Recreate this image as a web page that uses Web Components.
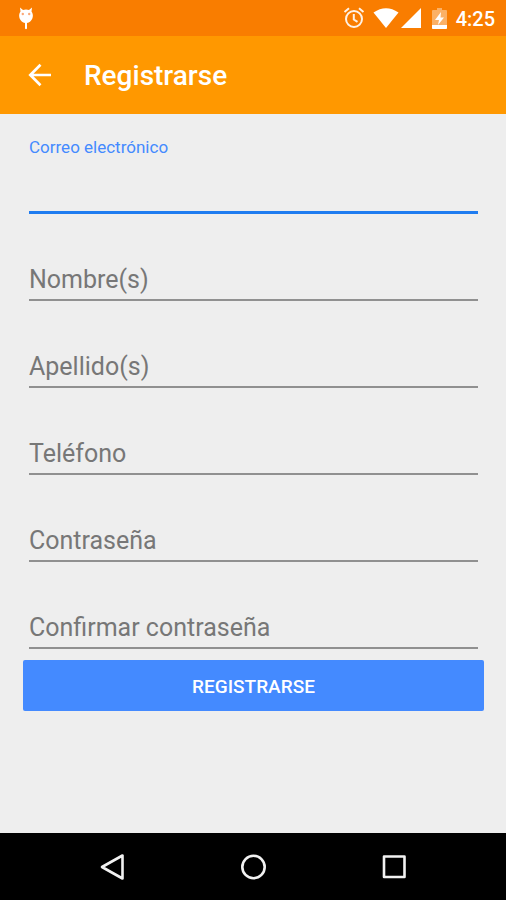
<!DOCTYPE html>
<html lang="es">
<head>
<meta charset="utf-8">
<meta name="viewport" content="width=device-width, initial-scale=1">
<title>Registrarse</title>
<style>
    body {
        margin: 0;
        background: #eee;
        font-family: Roboto, sans-serif;
    }
</style>
</head>
<body>
<sign-up-screen></sign-up-screen>

<script>
class StatusBar extends HTMLElement {
    constructor() {
        super();
        const shadow = this.attachShadow({ mode: 'open' });

        shadow.innerHTML = `
            <style>
                :host {
                    display: flex;
                    align-items: center;
                    height: 36px;
                    padding: 0 11px 0 17px;
                    background: #f97d00;
                    color: #fff;
                }
                svg {
                    display: block;
                    fill: currentColor;
                }
                .notification {
                    margin-right: auto;
                }
                .battery {
                    margin: 0 9px 0 11px;
                }
                .wifi {
                    margin-left: 8px;
                }
                .time {
                    font-size: 20px;
                    font-weight: 500;
                    line-height: 24px;
                    padding-top: 2px;
                }
            </style>
            <svg class="notification" width="18" height="24" viewBox="0 0 18 24">
                <path d="M3 1.500L6 4Q9 2.800 12 4L15 1.500L14.500 5.500A7.400 7.400 0 0 1 10 17V22.500Q9 24 8 22.500V17A7.400 7.400 0 0 1 3.500 5.500Z"/>
                <circle cx="5.800" cy="8" r="1.200" fill="#fba878"/>
                <circle cx="12.200" cy="8" r="1.200" fill="#fba878"/>
            </svg>
            <svg width="22" height="22" viewBox="0 0 22 22" opacity="0.9">
                <g fill="none" stroke="currentColor" stroke-width="2">
                    <circle cx="11" cy="12" r="8"/>
                    <path d="M1.500 5L6 1.300M20.500 5L16 1.300"/>
                    <path d="M10.800 7V12.500L14.500 14.800"/>
                </g>
            </svg>
            <svg class="wifi" width="26" height="20" viewBox="0 0 26 20">
                <path d="M0.500 4.500Q13 -4 25.500 4.500L13 20Z"/>
            </svg>
            <svg width="22" height="20" viewBox="0 0 22 20">
                <path d="M22 0V20H2Z"/>
            </svg>
            <svg class="battery" width="15" height="21" viewBox="0 0 15 21">
                <path d="M5 0H10V2H14Q15 2 15 3V20Q15 21 14 21H1Q0 21 0 20V3Q0 2 1 2H5Z" opacity="0.4"/>
                <path d="M0 17H15V20Q15 21 14 21H1Q0 21 0 20ZM9 4L3 12H7L6 17L12 9.500H8.500Z"/>
            </svg>
            <span class="time"><slot></slot></span>
        `;
    }
}

class AppBar extends HTMLElement {
    constructor() {
        super();
        const shadow = this.attachShadow({ mode: 'open' });

        shadow.innerHTML = `
            <style>
                :host {
                    display: flex;
                    align-items: center;
                    gap: 20px;
                    height: 78px;
                    padding: 0 16px;
                    background: #ff9800;
                    color: #fff;
                }
                button {
                    display: grid;
                    place-items: center;
                    width: 48px;
                    height: 48px;
                    padding: 0;
                    border: 0;
                    background: none;
                    color: inherit;
                }
                h1 {
                    margin: 0;
                    padding-top: 2px;
                    font-size: 28px;
                    font-weight: 500;
                    line-height: 36px;
                }
            </style>
            <button type="button" aria-label="Atrás">
                <svg width="24" height="24" viewBox="0 0 24 24" fill="none" stroke="#fff" stroke-width="2.700">
                    <path d="M23 12H3M12.500 1.800L2.300 12L12.500 22.200"/>
                </svg>
            </button>
            <h1><slot></slot></h1>
        `;
    }
}

class TextField extends HTMLElement {
    constructor() {
        super();
        const shadow = this.attachShadow({ mode: 'open' });

        // the label shares the input's grid cell until the field is active
        shadow.innerHTML = `
            <style>
                :host {
                    display: grid;
                    grid-template-rows: 39px 48px;
                }
                .field {
                    display: contents;
                }
                input {
                    grid-area: 2 / 1;
                    box-sizing: border-box;
                    width: 100%;
                    height: 48px;
                    margin: 0;
                    padding: 0;
                    border: 0;
                    border-bottom: 2px solid #909090;
                    border-radius: 0;
                    outline: 0;
                    background: none;
                    color: #212121;
                    font: inherit;
                    font-size: 25px;
                }
                label {
                    grid-area: 2 / 1;
                    align-self: end;
                    justify-self: start;
                    color: #777;
                    font-size: 25px;
                    line-height: 42px;
                    pointer-events: none;
                }
                .active input {
                    border-bottom: 3px solid #1f7cf0;
                }
                .active label {
                    grid-area: 1 / 1;
                    align-self: center;
                    color: #448aff;
                    font-size: 17px;
                    line-height: 24px;
                }
            </style>
            <div class="field">
                <input id="input">
                <label for="input"><slot></slot></label>
            </div>
        `;

        this.field = shadow.querySelector('.field');
        this.input = shadow.querySelector('input');
    }

    connectedCallback() {
        this.input.type = this.getAttribute('type') || 'text';
        this.field.classList.toggle('active', this.hasAttribute('active'));
        this.input.addEventListener('focus', () => this.field.classList.add('active'));
        this.input.addEventListener('blur', () => {
            this.field.classList.toggle('active', this.input.value !== '');
        });
    }
}

class RaisedButton extends HTMLElement {
    constructor() {
        super();
        const shadow = this.attachShadow({ mode: 'open' });

        shadow.innerHTML = `
            <style>
                :host {
                    display: block;
                }
                button {
                    display: block;
                    width: 100%;
                    height: 51px;
                    padding: 1px 0 0;
                    border: 0;
                    border-radius: 2px;
                    background: #448aff;
                    color: #fff;
                    font: inherit;
                    font-size: 19px;
                    font-weight: 500;
                    text-transform: uppercase;
                }
            </style>
            <button type="button"><slot></slot></button>
        `;
    }
}

class NavigationBar extends HTMLElement {
    constructor() {
        super();
        const shadow = this.attachShadow({ mode: 'open' });

        shadow.innerHTML = `
            <style>
                :host {
                    display: grid;
                    grid-template-columns: repeat(3, 1fr);
                    height: 67px;
                    padding: 0 8%;
                    background: #000;
                }
                button {
                    display: grid;
                    place-items: center;
                    padding: 0;
                    border: 0;
                    background: none;
                }
                svg {
                    fill: none;
                    stroke: #f2f2f2;
                    stroke-width: 2.600;
                    stroke-linejoin: round;
                }
            </style>
            <button type="button" aria-label="Atrás">
                <svg width="28" height="28" viewBox="0 0 28 28"><path d="M25.500 2.500V25.500L5 14Z"/></svg>
            </button>
            <button type="button" aria-label="Inicio">
                <svg width="28" height="28" viewBox="0 0 28 28"><circle cx="14.500" cy="14" r="11.200"/></svg>
            </button>
            <button type="button" aria-label="Recientes">
                <svg width="28" height="28" viewBox="0 0 28 28"><rect x="3" y="3.500" width="20.500" height="20.500"/></svg>
            </button>
        `;
    }
}

class SignUpScreen extends HTMLElement {
    constructor() {
        super();
        const shadow = this.attachShadow({ mode: 'open' });

        shadow.innerHTML = `
            <style>
                :host {
                    display: flex;
                    flex-direction: column;
                    min-height: 100vh;
                }
                form {
                    flex: 1;
                    padding: 13px 22px 16px 23px;
                }
                .fields {
                    padding: 0 6px 11px;
                }
            </style>
            <status-bar>4:25</status-bar>
            <app-bar>Registrarse</app-bar>
            <form>
                <div class="fields">
                    <text-field type="email" active>Correo electrónico</text-field>
                    <text-field>Nombre(s)</text-field>
                    <text-field>Apellido(s)</text-field>
                    <text-field type="tel">Teléfono</text-field>
                    <text-field type="password">Contraseña</text-field>
                    <text-field type="password">Confirmar contraseña</text-field>
                </div>
                <raised-button>Registrarse</raised-button>
            </form>
            <navigation-bar></navigation-bar>
        `;
    }
}

customElements.define('status-bar', StatusBar);
customElements.define('app-bar', AppBar);
customElements.define('text-field', TextField);
customElements.define('raised-button', RaisedButton);
customElements.define('navigation-bar', NavigationBar);
customElements.define('sign-up-screen', SignUpScreen);
</script>
</body>
</html>
